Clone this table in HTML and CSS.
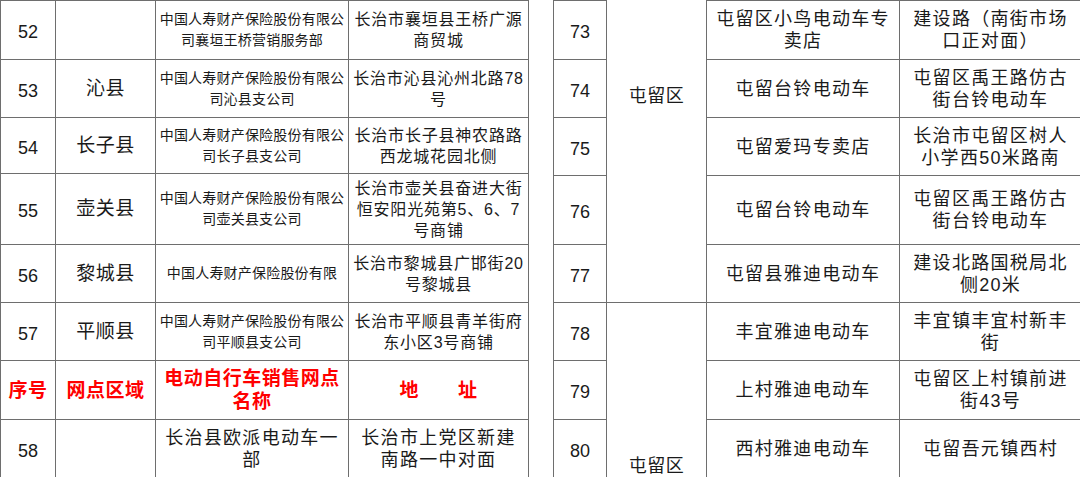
FILE: index.html
```html
<!DOCTYPE html>
<html lang="zh-CN">
<head>
<meta charset="utf-8">
<title>电动自行车销售网点</title>
<link rel="stylesheet" href="styles.css">
</head>
<body>
<div class="sheet">
  <table class="grid">
    <colgroup>
      <col class="c-no"><col class="c-area"><col class="c-name"><col class="c-addr">
    </colgroup>
    <tr class="r59">
      <td class="num">52</td>
      <td class="area"></td>
      <td class="co">中国人寿财产保险股份有限公<br>司襄垣王桥营销服务部</td>
      <td class="addr">长治市襄垣县王桥广源<br>商贸城</td>
    </tr>
    <tr class="r58">
      <td class="num">53</td>
      <td class="area">沁县</td>
      <td class="co">中国人寿财产保险股份有限公<br>司沁县支公司</td>
      <td class="addr">长治市沁县沁州北路78<br>号</td>
    </tr>
    <tr class="r56">
      <td class="num">54</td>
      <td class="area">长子县</td>
      <td class="co">中国人寿财产保险股份有限公<br>司长子县支公司</td>
      <td class="addr">长治市长子县神农路路<br>西龙城花园北侧</td>
    </tr>
    <tr class="r71">
      <td class="num">55</td>
      <td class="area">壶关县</td>
      <td class="co">中国人寿财产保险股份有限公<br>司壶关县支公司</td>
      <td class="addr">长治市壶关县奋进大街<br>恒安阳光苑第5、6、7<br>号商铺</td>
    </tr>
    <tr class="r58">
      <td class="num">56</td>
      <td class="area">黎城县</td>
      <td class="co">中国人寿财产保险股份有限</td>
      <td class="addr">长治市黎城县广邯街20<br>号黎城县</td>
    </tr>
    <tr class="r58">
      <td class="num">57</td>
      <td class="area">平顺县</td>
      <td class="co">中国人寿财产保险股份有限公<br>司平顺县支公司</td>
      <td class="addr">长治市平顺县青羊街府<br>东小区3号商铺</td>
    </tr>
    <tr class="r59 head">
      <td class="hd">序号</td>
      <td class="hd">网点区域</td>
      <td class="hd">电动自行车销售网点<br>名称</td>
      <td class="hd">地&emsp;&emsp;址</td>
    </tr>
    <tr class="r58">
      <td class="num">58</td>
      <td class="area"></td>
      <td class="big">长治县欧派电动车一<br>部</td>
      <td class="big">长治市上党区新建<br>南路一中对面</td>
    </tr>
  </table>

  <table class="grid">
    <colgroup>
      <col class="d-no"><col class="d-area"><col class="d-name"><col class="d-addr">
    </colgroup>
    <tr class="q59">
      <td class="num">73</td>
      <td class="region region-a" rowspan="5">屯留区</td>
      <td class="big">屯留区小鸟电动车专<br>卖店</td>
      <td class="big">建设路（南街市场<br>口正对面）</td>
    </tr>
    <tr class="q58">
      <td class="num">74</td>
      <td class="big">屯留台铃电动车</td>
      <td class="big">屯留区禹王路仿古<br>街台铃电动车</td>
    </tr>
    <tr class="q58">
      <td class="num">75</td>
      <td class="big">屯留爱玛专卖店</td>
      <td class="big">长治市屯留区树人<br>小学西50米路南</td>
    </tr>
    <tr class="q69">
      <td class="num">76</td>
      <td class="big">屯留台铃电动车</td>
      <td class="big">屯留区禹王路仿古<br>街台铃电动车</td>
    </tr>
    <tr class="q58">
      <td class="num">77</td>
      <td class="big">屯留县雅迪电动车</td>
      <td class="big">建设北路国税局北<br>侧20米</td>
    </tr>
    <tr class="q58">
      <td class="num">78</td>
      <td class="region region-b" rowspan="3">屯留区</td>
      <td class="big">丰宜雅迪电动车</td>
      <td class="big">丰宜镇丰宜村新丰<br>街</td>
    </tr>
    <tr class="q59">
      <td class="num">79</td>
      <td class="big">上村雅迪电动车</td>
      <td class="big">屯留区上村镇前进<br>街43号</td>
    </tr>
    <tr class="q58">
      <td class="num">80</td>
      <td class="big">西村雅迪电动车</td>
      <td class="big">屯留吾元镇西村</td>
    </tr>
  </table>
</div>
</body>
</html>
```

FILE: styles.css
```css
html, body {
  margin: 0;
  padding: 0;
  background: #ffffff;
}

body {
  width: 1080px;
  height: 477px;
  overflow: hidden;
  font-family: "Liberation Sans", "Noto Sans CJK SC", sans-serif;
  color: #1a1a1a;
}

.sheet {
  display: flex;
  gap: 24px;
  align-items: flex-start;
}

.grid {
  border-collapse: collapse;
  table-layout: fixed;
  width: 528px;
  flex: 0 0 528px;
}

.grid td {
  border: 1px solid #6e6e6e;
  padding: 0 2px;
  text-align: center;
  vertical-align: middle;
  overflow: hidden;
  white-space: nowrap;
}

.c-no { width: 55px; }
.c-area { width: 100px; }
.c-name { width: 193px; }
.c-addr { width: 180px; }

.d-no { width: 53px; }
.d-area { width: 100px; }
.d-name { width: 193px; }
.d-addr { width: 182px; }

.r56 { height: 56px; }
.r58 { height: 58px; }
.r59 { height: 59px; }
.r71 { height: 71px; }

.q58 { height: 58px; }
.q59 { height: 59px; }
.q69 { height: 69px; }

.grid .num {
  font-size: 18px;
  line-height: 22px;
  padding-top: 4px;
}

.area {
  font-size: 19px;
  line-height: 22px;
  letter-spacing: 0.5px;
}

.co {
  font-size: 14px;
  line-height: 21px;
  letter-spacing: 0.2px;
}

.addr {
  font-size: 16px;
  line-height: 21px;
  letter-spacing: 0.8px;
}

.big {
  font-size: 18px;
  line-height: 22px;
  letter-spacing: 1.3px;
}

.hd {
  font-size: 19px;
  line-height: 23px;
  font-weight: bold;
  color: #ff0000;
  letter-spacing: 0.5px;
}

.grid .region {
  font-size: 18px;
  line-height: 22px;
  letter-spacing: 0.5px;
  vertical-align: top;
}

.grid .region-a {
  padding-top: 84px;
  border-top: hidden;
}

.grid .region-b {
  padding-top: 152px;
  border-bottom: hidden;
}
```
